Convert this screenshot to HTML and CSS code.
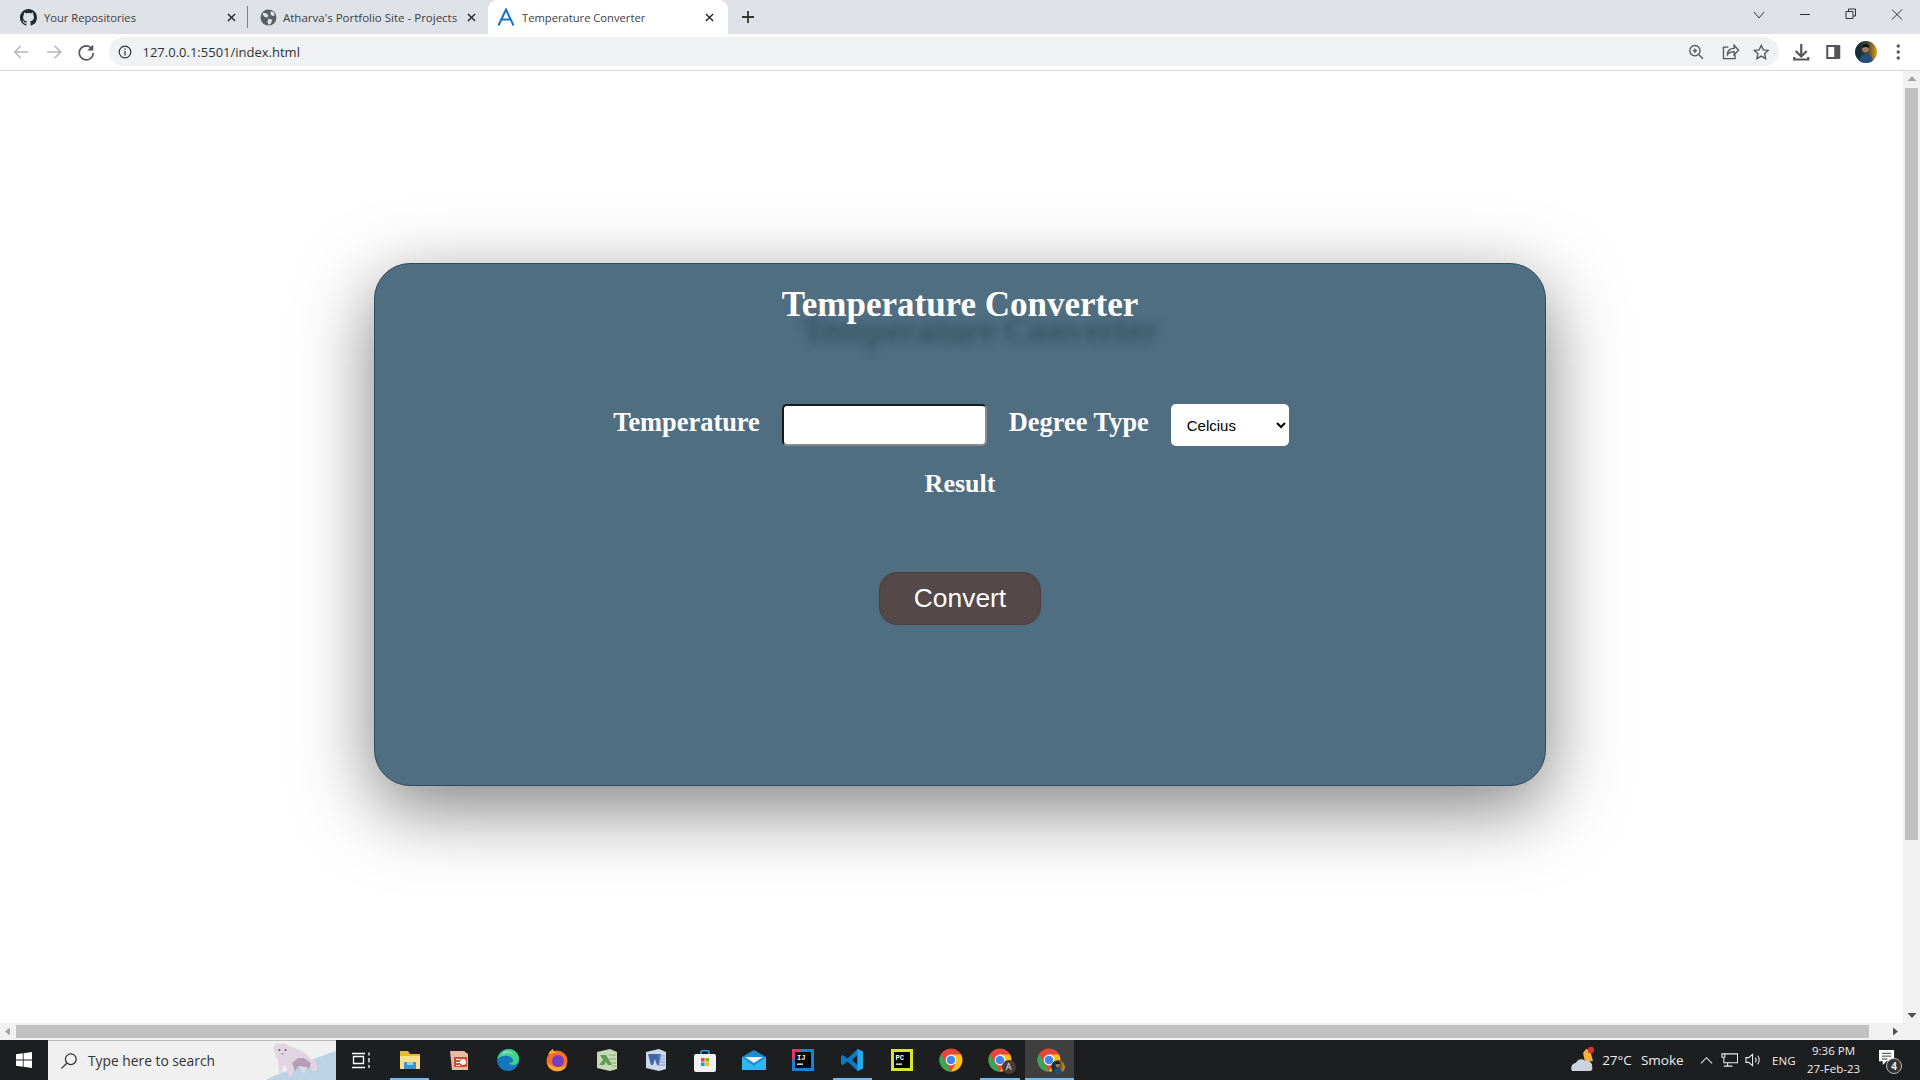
FILE: index.html
```html
<!DOCTYPE html>
<html lang="en">
<head>
  <meta charset="UTF-8" />
  <title>Temperature Converter</title>
  <link rel="stylesheet" href="styles.css">
</head>
<body>
<div class="screen">

  <!-- tabs -->
  <div class="tabstrip">
    <div class="tab tab-one">
      <svg class="tab-icon" viewBox="0 0 16 16"><path fill="#24292f" d="M8 0C3.58 0 0 3.58 0 8c0 3.54 2.29 6.53 5.47 7.59.4.07.55-.17.55-.38 0-.19-.01-.82-.01-1.49-2.01.37-2.53-.49-2.69-.94-.09-.23-.48-.94-.82-1.13-.28-.15-.68-.52-.01-.53.63-.01 1.08.58 1.23.82.72 1.21 1.87.87 2.33.66.07-.52.28-.87.51-1.07-1.78-.2-3.64-.89-3.64-3.95 0-.87.31-1.59.82-2.15-.08-.2-.36-1.02.08-2.12 0 0 .67-.21 2.2.82.64-.18 1.32-.27 2-.27.68 0 1.36.09 2 .27 1.53-1.04 2.2-.82 2.2-.82.44 1.1.16 1.92.08 2.12.51.56.82 1.27.82 2.15 0 3.07-1.87 3.75-3.65 3.95.29.25.54.73.54 1.48 0 1.07-.01 1.93-.01 2.2 0 .21.15.46.55.38A8.013 8.013 0 0016 8c0-4.42-3.58-8-8-8z"/></svg>
      <span class="tab-title">Your Repositories</span>
      <svg class="tab-close" viewBox="0 0 10 10"><path d="M1 1l8 8M9 1l-8 8"/></svg>
    </div>
    <div class="tab-divider"></div>
    <div class="tab tab-two">
      <svg class="tab-icon" viewBox="0 0 16 16"><circle cx="8" cy="8" r="7.500" fill="#5a5f64"/><path fill="#dee1e6" d="M3 3.500l3 .5 2 2-1 2-2.500-.5-2-2zM10 2l3 1 1 3-2.500.5L10 5zM8 9l3.500 1-1 3.500L8 15l-1-3z"/></svg>
      <span class="tab-title">Atharva's Portfolio Site - Projects</span>
      <svg class="tab-close" viewBox="0 0 10 10"><path d="M1 1l8 8M9 1l-8 8"/></svg>
    </div>
    <div class="tab tab-active">
      <svg class="tab-icon-a" viewBox="0 0 18 18"><path fill="none" stroke="#1473c8" stroke-width="2" d="M1.500 17.500L9 1.500l7.500 16M4.500 11.500h9"/></svg>
      <span class="tab-title">Temperature Converter</span>
      <svg class="tab-close" viewBox="0 0 10 10"><path d="M1 1l8 8M9 1l-8 8"/></svg>
    </div>
    <svg class="new-tab" viewBox="0 0 12 12"><path d="M6 0v12M0 6h12"/></svg>
    <div class="window-controls">
      <svg class="win-btn" viewBox="0 0 46 34"><path d="M18 11l5 6 5-6" transform="translate(0 1)"/></svg>
      <svg class="win-btn" viewBox="0 0 46 34"><path d="M18 14.500h10"/></svg>
      <svg class="win-btn" viewBox="0 0 46 34"><path d="M18 11.500h7v7h-7zM20.500 11.500v-2.500h7v7h-2.500"/></svg>
      <svg class="win-btn" viewBox="0 0 46 34"><path d="M18 9.500l10 10M28 9.500l-10 10"/></svg>
    </div>
  </div>

  <!-- address bar -->
  <div class="toolbar">
    <svg class="tool-btn faded" viewBox="0 0 32 32"><path d="M23 16H10M15.500 10L9.500 16l6 6"/></svg>
    <svg class="tool-btn faded" viewBox="0 0 32 32"><path d="M9 16h13M16.500 10l6 6-6 6"/></svg>
    <svg class="tool-btn" viewBox="0 0 32 32"><path d="M21.500 12.500A7 7 0 1 0 23 17"/><path class="solid" d="M23 8.500v6h-6z"/></svg>
    <div class="omnibox">
      <svg class="info-icon" viewBox="0 0 14 14"><circle cx="7" cy="7" r="5.800"/><path d="M7 6v4.500M7 3.500v1.500"/></svg>
      <span class="url">127.0.0.1:5501/index.html</span>
      <div class="omni-actions">
        <svg class="tool-btn thin" viewBox="-2 -2 36 36"><circle cx="14.500" cy="14.500" r="5.800"/><path d="M19 19l4.500 4.500M14.500 12v5M12 14.500h5"/></svg>
        <svg class="tool-btn thin" viewBox="-2 -2 36 36"><path d="M15 10.500H9.500v13h13V19M14 19c0-4.500 3-7 7.500-7V8.500l5 5.500-5 5v-3.500c-3.500 0-6 1-7.500 3.500z"/></svg>
        <svg class="tool-btn thin" viewBox="-2 -2 36 36"><path d="M16 8.500l2.300 5.100 5.500.6-4.100 3.700 1.200 5.500-4.900-2.800-4.900 2.800 1.200-5.500-4.100-3.700 5.500-.6z"/></svg>
      </div>
    </div>
    <div class="toolbar-right">
      <svg class="tool-btn thick" viewBox="0 0 32 32"><path d="M16 8v12M10.500 15l5.500 5.500 5.500-5.500M9 21v2.500h14V21"/></svg>
      <svg class="tool-btn" viewBox="0 0 32 32"><path class="solid" d="M9 9h14v14H9zM11 11v10h6V11z" fill-rule="evenodd"/></svg>
      <div class="avatar-slot">
        <svg class="avatar" viewBox="0 0 22 22"><use href="#profile-photo"/></svg>
      </div>
      <svg class="tool-btn" viewBox="0 0 32 32"><circle class="solid" cx="16" cy="10" r="1.700"/><circle class="solid" cx="16" cy="16" r="1.700"/><circle class="solid" cx="16" cy="22" r="1.700"/></svg>
    </div>
  </div>

  <!-- page plus scrollbars -->
  <div class="viewport">
    <div class="page-column">
      <main class="page">
        <section class="card">
          <h1 class="card-title">Temperature Converter</h1>
          <form class="form-row">
            <label class="field-label" for="temperature">Temperature</label>
            <input class="temp-input" id="temperature" type="text" />
            <label class="field-label" for="degree">Degree Type</label>
            <select class="degree-select" id="degree">
              <option>Celcius</option>
              <option>Fahrenheit</option>
            </select>
          </form>
          <div class="result">Result</div>
          <button class="convert-btn" type="button">Convert</button>
        </section>
      </main>
      <div class="hscroll">
        <svg class="scroll-arrow" viewBox="0 0 16 17"><path d="M10 4.500v8l-5-4z"/></svg>
        <div class="hthumb"></div>
        <svg class="scroll-arrow dark" viewBox="0 0 16 17"><path d="M6 4.500v8l5-4z"/></svg>
      </div>
    </div>
    <div class="vscroll">
      <svg class="scroll-arrow" viewBox="0 0 16 17"><path d="M8 5l4.500 5h-9z"/></svg>
      <div class="vthumb"></div>
      <svg class="scroll-arrow dark" viewBox="0 0 16 17"><path d="M8 12l4.500-5h-9z"/></svg>
    </div>
  </div>

  <!-- windows taskbar -->
  <footer class="taskbar">
    <div class="start">
      <svg viewBox="0 0 16 16" class="start-logo"><path fill="#fff" d="M0 2.300l6.800-1v6.300H0zM7.600 1.200L16 0v7.600H7.600zM0 8.400h6.800v6.300l-6.800-1zM7.600 8.400H16V16l-8.400-1.200z"/></svg>
    </div>
    <div class="search">
      <svg class="search-icon" viewBox="0 0 20 20"><circle cx="12" cy="8" r="6"/><path d="M7.500 12.500L1.500 18.500"/></svg>
      <span class="search-text">Type here to search</span>
      <svg class="search-art" viewBox="0 0 70 39">
        <path fill="#bcd3e6" d="M0 39C12 32 28 28 36 24 46 18 58 14 70 10v29z"/>
        <path fill="#e2d5e2" d="M9 3c3-1 5 0 7 0 3-1 5 0 6 2 9 2 18 6 23 13 4 1 6 5 6 9 0 3-2 4-5 3l-2-4-4 1-1 5-3 0-2-6-6-1-2 10h-4l-1-8-4-3-1 8h-3l-1-13c-2-2-3-5-3-7-2-3-1-6 0-9z"/>
        <path fill="#b49fb6" d="M26 22l3 8 4-5 7 1 3 2 2-6-7-5-6 0z"/>
        <circle cx="13.500" cy="9" r="1" fill="#5c4f55"/><circle cx="19.500" cy="9" r="1" fill="#5c4f55"/>
        <path fill="#a78b9a" d="M15 12h3l-1.500 2z"/>
      </svg>
    </div>
    <div class="apps">
      <div class="app"><svg class="app-icon" viewBox="0 0 24 24"><path fill="none" stroke="#fff" stroke-width="1.300" d="M3 5.500h13M3 19.500h13M4.500 8.500h10v7h-10zM20 4.500v3M20 10v4.500M20 17v3"/></svg></div>
      <div class="app app-open"><svg class="app-icon" viewBox="0 0 24 24"><path fill="#e8b93d" d="M2 3h8l2 3h10v15H2z"/><path fill="#fbe08a" d="M2 8h20v13H2z"/><path fill="#3c94d6" d="M6 14h12v7H6z"/><path fill="#9bd0f2" d="M9 14h6v3H9z"/></svg></div>
      <div class="app"><svg class="app-icon" viewBox="0 0 24 24"><path fill="#eab8a4" d="M3 3h14l4 3v16H5z"/><path fill="#c8502e" d="M7 9h13v10H7z"/><circle cx="16" cy="14" r="3" fill="#fff"/><path fill="#fff" d="M9 11h4v1H9zm0 3h4v1H9zm0 3h4v1H9z"/></svg></div>
      <div class="app"><svg class="app-icon" viewBox="0 0 24 24"><circle cx="12" cy="12" r="11" fill="#1575bd"/><path fill="#3fd08a" d="M1.500 11C3 4 9 1 13 1c5 0 10 4 10 10 0 4-3 6-6 6-2 0-4-1-4-2 4 0 5-3 3-5-3-3-10-3-14.500 1z"/><path fill="#7ce0b0" d="M5 8c3-3 9-4 13-1-2-4-8-5-11-3z"/></svg></div>
      <div class="app"><svg class="app-icon" viewBox="0 0 24 24"><circle cx="12" cy="13" r="10.500" fill="#f36f2a"/><path fill="#ffb52e" d="M3 7c1-3 3-5 5-6 0 2 2 3 4 4-3 0-7 0-9 2z"/><circle cx="13" cy="13" r="6" fill="#7a3fc0"/><path fill="#f9ad2e" d="M2 14c1 6 6 9 11 9 4 0 7-2 9-6-4 3-14 4-20-3z"/></svg></div>
      <div class="app"><svg class="app-icon" viewBox="0 0 24 24"><path fill="#c6dbb5" d="M2 4l13-3 7 3v17l-7 2-13-3z"/><path fill="#5f9a56" d="M5 7l6 0 3 5 3 5h-4l-2-3-2 3H4l4-5z"/><path fill="none" stroke="#7da86f" d="M14 7h7M14 11h7M16 15h5M17 18h4"/></svg></div>
      <div class="app"><svg class="app-icon" viewBox="0 0 24 24"><path fill="#ccd9ec" d="M2 4l13-3 7 3v17l-7 2-13-3z"/><path fill="#3e66a8" d="M4 6h13l-2 11h-2l-2-6-2 6H7z"/><path fill="none" stroke="#7b97c6" d="M14 8h7M15 11h6M14 14h7M13 17h8"/></svg></div>
      <div class="app"><svg class="app-icon" viewBox="0 0 24 24"><path fill="none" stroke="#29a8df" stroke-width="1.600" d="M8 7V4c0-2 8-2 8 0v3"/><rect x="1" y="6" width="22" height="18" rx="2" fill="#f2f2f2"/><path fill="#f25022" d="M8 10h3.600v3.600H8z"/><path fill="#7fba00" d="M12.400 10H16v3.600h-3.600z"/><path fill="#00a4ef" d="M8 14.400h3.600V18H8z"/><path fill="#ffb900" d="M12.400 14.400H16V18h-3.600z"/></svg></div>
      <div class="app"><svg class="app-icon" viewBox="0 0 24 24"><path fill="#1b8dd0" d="M0 9l12-7 12 7v13H0z"/><path fill="#30b7ef" d="M0 9l12 9 12-9v13H0z"/><path fill="#eaf6fd" d="M3 9h18l-9 6z"/></svg></div>
      <div class="app"><svg class="app-icon" viewBox="0 0 24 24"><rect x="1" y="1" width="22" height="22" fill="#1f7fd6"/><path fill="#e23670" d="M1 1h10L1 13z"/><rect x="4" y="4" width="16" height="16" fill="#000"/><text class="ide-text" x="6" y="12">IJ</text><path fill="#fff" d="M6 15.500h6v1.300H6z"/></svg></div>
      <div class="app app-open"><svg class="app-icon" viewBox="0 0 24 24"><path fill="#0a78c2" d="M17.500 1L23 3.500v17L17.500 23 7.500 13.500 2.800 17.200 1 16V8l1.800-1 4.700 3.600zM17.500 7l-5.500 5 5.500 5z"/><path fill="#23a9ec" d="M17.500 1L23 3.500v17L17.500 23z"/></svg></div>
      <div class="app"><svg class="app-icon" viewBox="0 0 24 24"><rect x="1" y="1" width="22" height="22" fill="#d7e52a"/><rect x="4" y="4" width="16" height="16" fill="#000"/><text class="ide-text" x="5.500" y="12">PC</text><path fill="#fff" d="M6 15.500h6v1.300H6z"/></svg></div>
      <div class="app"><svg class="app-icon" viewBox="0 0 24 24"><use href="#chrome-logo"/></svg></div>
      <div class="app app-open">
        <svg class="app-icon" viewBox="0 0 24 24"><use href="#chrome-logo"/></svg>
        <span class="app-badge badge-letter">A</span>
      </div>
      <div class="app app-open app-active">
        <svg class="app-icon" viewBox="0 0 24 24"><use href="#chrome-logo"/></svg>
        <svg class="app-badge" viewBox="0 0 22 22"><use href="#profile-photo"/></svg>
      </div>
    </div>

    <div class="tray">
      <svg class="weather-icon" viewBox="0 0 26 26"><path fill="#f0b13e" d="M15 3l4 1 3 11-8 1-2-9z"/><circle cx="20" cy="4" r="3.200" fill="#c8372d"/><path fill="#c9d2de" d="M1 25c-2-3 0-8 4-8 1-4 7-5 9-2 4-1 8 2 7 6 1 2 0 4-2 4z"/></svg>
      <span class="weather-text">27°C</span>
      <span class="weather-text smoke">Smoke</span>
      <svg class="tray-icon caret" viewBox="0 0 14 14"><path d="M1 10l6-6 6 6"/></svg>
      <svg class="tray-icon net" viewBox="0 0 18 16"><path d="M4 1.500h13.500V11H3V6M7 11v3.500M3 14.500h9M1 1.500h3v3.500H1z"/></svg>
      <svg class="tray-icon speaker" viewBox="0 0 18 16"><path d="M1 5.500h3L8 2v12l-4-3.500H1zM11 5.500c1 1.500 1 3.500 0 5M13.500 3.500c2 2.500 2 6.500 0 9"/></svg>
      <span class="lang">ENG</span>
      <div class="clock"><span>9:36 PM</span><span>27-Feb-23</span></div>
      <div class="notif">
        <svg class="notif-icon" viewBox="0 0 18 18"><path fill="#fff" d="M0 0h16v12H8l-4 4v-4H0z"/><path stroke="#333" d="M3 3.500h10M3 6.500h10M3 9.500h6"/></svg>
        <span class="notif-count">4</span>
      </div>
    </div>
  </footer>
</div>

<svg class="defs" width="0" height="0">
  <defs>
    <g id="chrome-logo">
      <circle cx="12" cy="12" r="11.500" fill="#e8453c"/>
      <path fill="#34a853" d="M12 23.500A11.500 11.500 0 0 1 2 6.200L8 16.500z"/>
      <path fill="#fbc116" d="M12 23.500A11.500 11.500 0 0 0 22 6.500H12l4 10z"/>
      <circle cx="12" cy="12" r="5.400" fill="#fff"/>
      <circle cx="12" cy="12" r="4.300" fill="#3f86ee"/>
    </g>
    <clipPath id="photo-clip"><circle cx="11" cy="11" r="11"/></clipPath>
    <linearGradient id="photo-bg"><stop offset="0.2" stop-color="#16303a"/><stop offset="0.6" stop-color="#4a4a30"/><stop offset="1" stop-color="#e39a1c"/></linearGradient>
    <g id="profile-photo" clip-path="url(#photo-clip)">
      <rect width="22" height="22" fill="url(#photo-bg)"/>
      <path fill="#244f78" d="M4 22c0-6 3-9 7-9s7 3 7 9z"/>
      <circle cx="10.500" cy="8" r="3.400" fill="#a97a5c"/>
      <path fill="#111" d="M7 7c0-3 2-4 4-4s3.500 1.500 3 4c-2-1.500-4-1.500-7 0z"/>
    </g>
  </defs>
</svg>
</body>
</html>
```

FILE: styles.css
```css
* { box-sizing: border-box; }
html, body { margin: 0; height: 100%; overflow: hidden; }
body { font-family: "Open Sans", "Noto Sans", sans-serif; background: #fff; }
.screen { height: 1080px; display: flex; flex-direction: column; }
.defs { position: absolute; }

/* tab strip */
.tabstrip {
  height: 34px;
  background: #dee1e6;
  display: flex;
  align-items: flex-end;
  flex: none;
}
.tab { height: 34px; display: flex; align-items: center; font-size: 11.2px; color: #3c4043; }
.tab-one { width: 239px; margin-left: 8px; padding-left: 12px; }
.tab-two { width: 240px; padding-left: 12px; font-size: 11.5px; }
.tab-active {
  width: 240px;
  background: #fff;
  border-radius: 9px 9px 0 0;
  padding-left: 9px;
}
.tab-divider { width: 1px; height: 22px; background: #7d8085; margin-bottom: 6px; }
.tab-icon { width: 17px; height: 17px; flex: none; }
.tab-icon-a { width: 18px; height: 18px; flex: none; }
.tab-title { flex: 1; margin-left: 7px; white-space: nowrap; overflow: hidden; }
.tab-two .tab-title { margin-left: 6px; }
.tab-close { width: 9px; height: 9px; flex: none; margin-right: 11px; fill: none; stroke: #222; stroke-width: 1.5; }
.tab-two .tab-close { margin-right: 12px; }
.tab-active .tab-close { margin-right: 14px; }
.new-tab { width: 12px; height: 12px; margin: 0 0 11px 14px; fill: none; stroke: #333; stroke-width: 1.8; }
.window-controls { margin-left: auto; display: flex; }
.win-btn { width: 46px; height: 34px; fill: none; stroke: #333; stroke-width: 1; }

/* toolbar */
.toolbar {
  height: 37px;
  flex: none;
  display: flex;
  align-items: center;
  padding: 0 6px 1px 5px;
  background: #fff;
  border-bottom: 1px solid #d6d7d9;
}
.tool-btn { width: 32.5px; height: 32px; flex: none; fill: none; stroke: #555; stroke-width: 1.6; }
.tool-btn.faded { stroke: #b5b7ba; }
.tool-btn .solid { fill: #555; stroke: none; }
.tool-btn.thick { stroke-width: 2.2; }
.tool-btn.thin { stroke-width: 1.5; }
.omnibox {
  flex: 1;
  height: 29px;
  margin-left: 6px;
  background: #eff1f3;
  border-radius: 15px;
  display: flex;
  align-items: center;
  padding: 0 1px 0 9px;
}
.info-icon { width: 14px; height: 14px; fill: none; stroke: #333; stroke-width: 1.2; flex: none; }
.url { margin-left: 11px; font-size: 13px; color: #303134; }
.omni-actions { margin-left: auto; display: flex; }
.toolbar-right { display: flex; align-items: center; margin-left: 6px; }
.avatar-slot { width: 32px; height: 32px; display: flex; align-items: center; justify-content: center; }
.avatar { width: 22px; height: 22px; }

/* page */
.viewport { flex: 1; min-height: 0; display: flex; }
.page-column { flex: 1; min-width: 0; display: flex; flex-direction: column; }
.page { flex: 1; min-height: 0; overflow: hidden; padding: 192px 0 0 374px; }
.card {
  width: 1172px;
  height: 523px;
  background: #4f6e82;
  border: 1px solid #2e4a5c;
  border-radius: 36px;
  box-shadow: 0 22px 75px rgba(0, 0, 0, 0.5);
  display: flex;
  flex-direction: column;
  align-items: center;
  padding-top: 21px;
  color: #fff;
  font-family: "Liberation Serif", "Times New Roman", serif;
}
.card-title {
  margin: 0;
  font-size: 35px;
  line-height: 40px;
  font-weight: bold;
  text-shadow: 20px 26px 10px rgba(45, 70, 85, 0.65);
}
.form-row { display: flex; align-items: center; gap: 22px; margin-top: 79px; padding-right: 18px; }
.field-label { font-size: 26.4px; font-weight: bold; padding-bottom: 5px; }
.temp-input {
  width: 205px;
  height: 42px;
  border-radius: 5px;
  border: 2px solid;
  border-color: #1a1a1a #8a8a8a #8a8a8a #1a1a1a;
  background: #fff;
}
.degree-select {
  width: 118px;
  height: 42px;
  border: none;
  border-radius: 5px;
  background: #fff;
  color: #000;
  padding-left: 12px;
  font-family: "Liberation Sans", Arial, sans-serif;
  font-size: 15px;
}
.result { font-size: 26px; font-weight: bold; line-height: 30px; margin-top: 23px; }
.convert-btn {
  width: 162px;
  height: 53px;
  margin-top: 73px;
  background: #544848;
  color: #fff;
  border: 1px solid #4a4040;
  border-radius: 18px;
  font-family: "Liberation Sans", Arial, sans-serif;
  font-size: 26.4px;
}

/* scrollbars */
.hscroll { height: 17px; flex: none; background: #f1f1f1; display: flex; align-items: center; }
.hthumb { flex: 1; height: 13px; background: #c1c1c1; margin-right: 18px; }
.vscroll { width: 17px; flex: none; background: #f1f1f1; display: flex; flex-direction: column; align-items: center; }
.vthumb { width: 13px; height: 752px; background: #c1c1c1; }
.vscroll .dark { margin-top: auto; margin-bottom: 17px; }
.scroll-arrow { width: 16px; height: 17px; flex: none; fill: #a3a3a3; }
.scroll-arrow.dark { fill: #505050; }

/* taskbar */
.taskbar { height: 40px; flex: none; background: #1d1e20; display: flex; color: #fff; }
.start { width: 48px; display: flex; align-items: center; justify-content: center; }
.start-logo { width: 16px; height: 16px; }
.search {
  width: 288px;
  background: #f0f0f0;
  border-top: 1px solid #bbb;
  display: flex;
  align-items: center;
  padding-left: 12px;
  color: #333;
}
.search-icon { width: 18px; height: 18px; fill: none; stroke: #333; stroke-width: 1.4; flex: none; }
.search-text { margin-left: 10px; font-size: 13.8px; white-space: nowrap; }
.search-art { width: 70px; height: 39px; margin-left: auto; flex: none; }
.apps { display: flex; }
.app {
  width: 49.2px;
  height: 40px;
  display: flex;
  align-items: center;
  justify-content: center;
  position: relative;
}
.app-icon { width: 24px; height: 24px; }
.app-open::after {
  content: "";
  position: absolute;
  left: 5px;
  right: 5px;
  bottom: 0;
  height: 2px;
  background: #76b9ed;
}
.app-active { background: #3f3f3f; }
.app-active::after { left: 0; right: 0; }
.ide-text { font: bold 7px "Liberation Mono", monospace; fill: #fff; }
.app-badge {
  position: absolute;
  width: 14px;
  height: 14px;
  right: 9px;
  bottom: 6px;
  border-radius: 50%;
}
.badge-letter { background: #4a3c38; font: 9px/14px "Open Sans", sans-serif; text-align: center; color: #eee; }

.tray { margin-left: auto; display: flex; align-items: center; font-size: 13px; color: #eee; padding-right: 16px; }
.weather-icon { width: 26px; height: 26px; flex: none; margin-bottom: 2px; }
.weather-text { margin-left: 5.6px; font-size: 13.5px; }
.smoke { margin-left: 9px; }
.tray-icon { fill: none; stroke: #eee; stroke-width: 1.1; flex: none; }
.caret { width: 13px; height: 13px; margin-left: 16px; }
.net { width: 17px; height: 16px; margin-left: 8.5px; }
.speaker { width: 17px; height: 16px; margin-left: 7px; }
.lang { font-size: 11.5px; margin-left: 10px; }
.clock {
  width: 60px;
  margin-left: 8px;
  display: flex;
  flex-direction: column;
  align-items: center;
  font-size: 11.5px;
  line-height: 18px;
}
.notif { width: 30px; height: 30px; margin-left: 10.5px; position: relative; }
.notif-icon { width: 17px; height: 17px; position: absolute; left: 5px; top: 5px; }
.notif-count {
  position: absolute;
  left: 12px;
  top: 13px;
  width: 16px;
  height: 16px;
  background: #333;
  border: 1px solid #bbb;
  border-radius: 50%;
  font: bold 10px/14px "Open Sans", sans-serif;
  text-align: center;
}
```
